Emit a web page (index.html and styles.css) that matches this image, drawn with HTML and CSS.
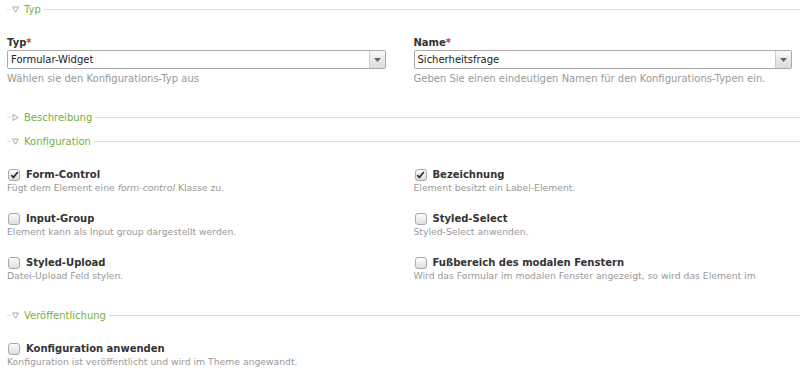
FILE: index.html
```html
<!DOCTYPE html>
<html lang="de">
<head>
    <meta charset="UTF-8">
    <meta name="viewport" content="width=device-width, initial-scale=1.0">
    <title>Konfiguration bearbeiten</title>
    <link rel="stylesheet" href="styles.css">
</head>
<body>
<div class="page">

    <div class="section-head">
        <svg class="toggle" width="7" height="7" viewBox="0 0 7 7"><path d="M0.5 1 L6.5 1 L3.5 6.2 Z" fill="none" stroke="#aaa" stroke-width="1"/></svg>
        <span class="legend">Typ</span>
    </div>

    <div class="columns type-row">
        <div class="field">
            <label class="field-label">Typ<span class="req">*</span></label>
            <div class="select">
                <span class="select-value">Formular-Widget</span>
                <span class="select-btn"><svg width="7" height="4" viewBox="0 0 7 4"><path d="M0 0 L7 0 L3.5 4 Z" fill="#666"/></svg></span>
            </div>
            <div class="help">Wählen sie den Konfigurations-Typ aus</div>
        </div>
        <div class="field">
            <label class="field-label">Name<span class="req">*</span></label>
            <div class="select">
                <span class="select-value">Sicherheitsfrage</span>
                <span class="select-btn"><svg width="7" height="4" viewBox="0 0 7 4"><path d="M0 0 L7 0 L3.5 4 Z" fill="#666"/></svg></span>
            </div>
            <div class="help">Geben Sie einen eindeutigen Namen für den Konfigurations-Typen ein.</div>
        </div>
    </div>

    <div class="section-head">
        <svg class="toggle" width="7" height="7" viewBox="0 0 7 7"><path d="M1 0.5 L6.2 3.5 L1 6.5 Z" fill="none" stroke="#aaa" stroke-width="1"/></svg>
        <span class="legend">Beschreibung</span>
    </div>

    <div class="section-head tight">
        <svg class="toggle" width="7" height="7" viewBox="0 0 7 7"><path d="M0.5 1 L6.5 1 L3.5 6.2 Z" fill="none" stroke="#aaa" stroke-width="1"/></svg>
        <span class="legend">Konfiguration</span>
    </div>

    <div class="columns checks">
        <div class="check">
            <div class="check-line">
                <span class="box"><svg width="9" height="8" viewBox="0 0 9 8"><path d="M1.2 4.2 L3.4 6.4 L7.8 1" fill="none" stroke="#333" stroke-width="1.8"/></svg></span>
                <span class="check-label">Form-Control</span>
            </div>
            <div class="help">Fügt dem Element eine <em>form-control</em> Klasse zu.</div>
        </div>
        <div class="check">
            <div class="check-line">
                <span class="box"><svg width="9" height="8" viewBox="0 0 9 8"><path d="M1.2 4.2 L3.4 6.4 L7.8 1" fill="none" stroke="#333" stroke-width="1.8"/></svg></span>
                <span class="check-label">Bezeichnung</span>
            </div>
            <div class="help">Element besitzt ein Label-Element.</div>
        </div>
        <div class="check">
            <div class="check-line">
                <span class="box"></span>
                <span class="check-label">Input-Group</span>
            </div>
            <div class="help">Element kann als Input group dargestellt werden.</div>
        </div>
        <div class="check">
            <div class="check-line">
                <span class="box"></span>
                <span class="check-label">Styled-Select</span>
            </div>
            <div class="help">Styled-Select anwenden.</div>
        </div>
        <div class="check">
            <div class="check-line">
                <span class="box"></span>
                <span class="check-label">Styled-Upload</span>
            </div>
            <div class="help">Datei-Upload Feld stylen.</div>
        </div>
        <div class="check">
            <div class="check-line">
                <span class="box"></span>
                <span class="check-label">Fußbereich des modalen Fenstern</span>
            </div>
            <div class="help">Wird das Formular im modalen Fenster angezeigt, so wird das Element im</div>
        </div>
    </div>

    <div class="section-head wide">
        <svg class="toggle" width="7" height="7" viewBox="0 0 7 7"><path d="M0.5 1 L6.5 1 L3.5 6.2 Z" fill="none" stroke="#aaa" stroke-width="1"/></svg>
        <span class="legend">Veröffentlichung</span>
    </div>

    <div class="columns checks">
        <div class="check">
            <div class="check-line">
                <span class="box"></span>
                <span class="check-label">Konfiguration anwenden</span>
            </div>
            <div class="help">Konfiguration ist veröffentlicht und wird im Theme angewandt.</div>
        </div>
    </div>

</div>
</body>
</html>
```

FILE: styles.css
```css
body {
    margin: 0;
    padding: 0;
    background: #fff;
    font-family: "DejaVu Sans", Verdana, sans-serif;
    color: #333;
}
.page {
    padding: 4px 0 0 7px;
}

/* Abschnitts-Kopf (wie Fieldset-Legende) */
.section-head {
    display: flex;
    align-items: center;
    height: 11px;
    margin-top: 27px;
}
.page > .section-head:first-child {
    margin-top: 0;
}
.section-head.tight {
    margin-top: 13px;
}
.section-head.wide {
    margin-top: 28px;
}
.section-head::before {
    content: "";
    width: 4px;
    height: 1px;
    background: #ddd;
    margin-right: 1px;
}
.section-head::after {
    content: "";
    flex: 1;
    height: 1px;
    background: #ddd;
    margin-left: 3px;
}
.toggle {
    margin-right: 5px;
    flex: none;
}
.legend {
    font-size: 10px;
    line-height: 11px;
    color: #76b043;
}

/* Spalten */
.columns {
    display: grid;
    grid-template-columns: 1fr 1fr;
    column-gap: 28px;
    padding-right: 8px;
}
.type-row {
    margin-top: 22px;
}
.field-label {
    display: block;
    font-size: 10px;
    font-weight: bold;
    line-height: 12px;
    color: #333;
}
.req {
    color: #c4383d;
}
.select {
    display: flex;
    height: 19px;
    margin-top: 1px;
    border: 1px solid #aaa;
    border-radius: 2px;
    box-sizing: border-box;
    background: #fff;
}
.select-value {
    flex: 1;
    padding-left: 3px;
    font-size: 10px;
    line-height: 17px;
    color: #222;
}
.select-btn {
    width: 15px;
    display: flex;
    align-items: center;
    justify-content: center;
    border-left: 1px solid #ccc;
    background: linear-gradient(#f8f8f8, #dcdcdc);
}
.help {
    font-size: 9.25px;
    line-height: 13px;
    color: #999;
    white-space: nowrap;
    overflow: hidden;
}
.field .help {
    margin-top: 4px;
    font-size: 10px;
    line-height: 12px;
}

/* Checkboxen */
.checks {
    margin-top: 21px;
    row-gap: 18px;
}
.check-line {
    display: flex;
    align-items: center;
    height: 13px;
}
.box {
    width: 12px;
    height: 12px;
    margin-left: 1px;
    margin-right: 6px;
    box-sizing: border-box;
    border: 1px solid #aaa;
    border-radius: 3px;
    background: linear-gradient(#fcfcfc, #dedede);
    display: flex;
    align-items: center;
    justify-content: center;
}
.check-label {
    font-size: 10px;
    font-weight: bold;
    color: #333;
}
```
